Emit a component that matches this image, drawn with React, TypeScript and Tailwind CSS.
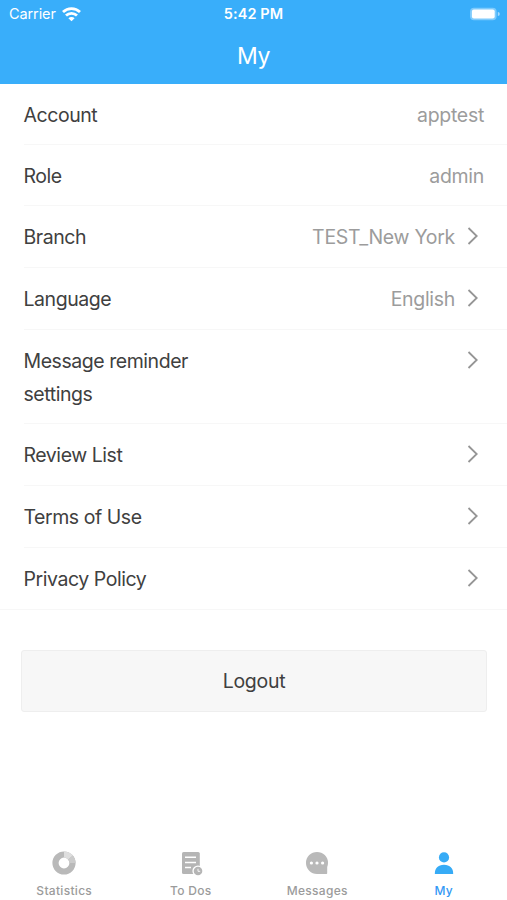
import React from "react";
import clsx from "clsx";

const rows = [
  { label: "Account", value: "apptest", height: "h-[61px]" },
  { label: "Role", value: "admin", height: "h-[61px]" },
  { label: "Branch", value: "TEST_New York", arrow: true, height: "h-[62px]" },
  { label: "Language", value: "English", arrow: true, height: "h-[62px]" },
  { label: "Message reminder settings", arrow: true, height: "h-[94px]" },
  { label: "Review List", arrow: true, height: "h-[62px]" },
  { label: "Terms of Use", arrow: true, height: "h-[62px]" },
  { label: "Privacy Policy", arrow: true, height: "h-[61px]" },
];

const tabs = [
  { name: "Statistics", icon: StatisticsIcon },
  { name: "To Dos", icon: TodoIcon },
  { name: "Messages", icon: MessagesIcon },
  { name: "My", icon: UserIcon, active: true },
];

function StatisticsIcon() {
  return (
    <svg width="26" height="26" viewBox="0 0 26 26" fill="none" strokeWidth="6.2">
      <circle cx="13" cy="13" r="8.5" stroke="#b9b9b9" />
      <path d="M13 4.5A8.5 8.5 0 0 1 19.5 7.5" stroke="#dedede" />
      <path d="M19.5 7.5A8.5 8.5 0 0 1 21.5 13" stroke="#cbcbcb" />
    </svg>
  );
}

function TodoIcon() {
  return (
    <svg width="26" height="26" viewBox="0 0 26 26" fill="none">
      <rect x="4" y="2" width="17.8" height="22" rx="1.6" fill="#b5b5b5" />
      <path d="M7 7.2h11M7 12.4h11M7 17.6h6" stroke="#fff" strokeWidth="1.5" />
      <circle cx="20" cy="21" r="5.6" fill="#fff" />
      <circle cx="20" cy="21" r="4.3" fill="#b5b5b5" />
      <path d="M20 18.8V21.3h2.2" stroke="#fff" strokeWidth="0.9" />
    </svg>
  );
}

function MessagesIcon() {
  return (
    <svg width="26" height="26" viewBox="0 0 26 26" fill="none">
      <path d="M13 1.9a11 11 0 1 0 0 22h9.2c.7 0 1-.4 1-1v-6a11 11 0 0 0 .8-4A11 11 0 0 0 13 1.9Z" fill="#b9b9b9" />
      <circle cx="7.4" cy="13" r="1.6" fill="#fff" />
      <circle cx="13" cy="13" r="1.6" fill="#fff" />
      <circle cx="18.6" cy="13" r="1.6" fill="#fff" />
    </svg>
  );
}

function UserIcon() {
  return (
    <svg width="26" height="26" viewBox="0 0 26 26" fill="#36abf6">
      <circle cx="13" cy="7.4" r="5.1" />
      <path d="M3.8 23.9c0-5.6 3.2-9.1 9.2-9.1s9.2 3.5 9.2 9.1Z" />
    </svg>
  );
}

function WifiIcon() {
  return (
    <svg width="19" height="15" viewBox="0 0 19 15" fill="none" stroke="#fff" strokeWidth="2.8">
      <path d="M1 5a12.2 12.2 0 0 1 17 0" />
      <path d="M4 8.6a7.9 7.9 0 0 1 11 0" />
      <path d="M9.5 14.3 6.4 11.2a4.4 4.4 0 0 1 6.2 0Z" fill="#fff" stroke="none" />
    </svg>
  );
}

function BatteryIcon() {
  return (
    <svg width="32" height="14" viewBox="0 0 32 14">
      <rect x="1" y="0.7" width="26.6" height="12.6" rx="4" fill="#7fcbfc" />
      <rect x="2.9" y="2.6" width="22.8" height="8.8" rx="2" fill="#fff" />
      <path d="M28.8 5a2 2 0 0 1 0 4Z" fill="#a5dafd" />
    </svg>
  );
}

function Arrow() {
  return (
    <svg className="ml-[12px] mr-[5px] mt-[6px] shrink-0" width="12" height="18" viewBox="0 0 12 18" fill="none" stroke="#959595" strokeWidth="1.8">
      <path d="M1.5 1 9.7 9 1.5 17" />
    </svg>
  );
}

export default function App() {
  return (
    <div className="flex h-[900px] w-[507px] flex-col overflow-hidden bg-white font-['Inter',sans-serif] text-[#404040]">
      <header className="h-[84px] bg-[#39aefa] text-white">
        <div className="grid h-[28px] grid-cols-3 items-center pl-[9px] pr-[6px]">
          <div className="flex items-center gap-[6px] text-[14.5px] tracking-[-0.1px]">
            <span>Carrier</span>
            <WifiIcon />
          </div>
          <span className="-ml-[3px] text-center text-[14.5px] font-semibold tracking-[0.1px]">5:42 PM</span>
          <div className="flex justify-end">
            <BatteryIcon />
          </div>
        </div>
        <h1 className="text-center text-[23px] leading-[56px] tracking-[-0.3px]">My</h1>
      </header>

      <main className="flex-1">
        <div className="border-b border-[#f7f7f7]">
          {rows.map((row, index) => (
            <div key={row.label} className="pl-[24px]">
              <div
                className={clsx(
                  "flex items-start justify-between pr-[23px] pt-[15px] text-[19.5px] leading-[33px]",
                  row.height,
                  index < rows.length - 1 && "border-b border-[#f7f7f7]"
                )}
              >
                <span className="-ml-[0.5px] w-[190px] tracking-[-0.45px]">{row.label}</span>
                <div className="flex items-start tracking-[-0.3px] text-[#9c9c9c]">
                  {row.value && <span>{row.value}</span>}
                  {row.arrow && <Arrow />}
                </div>
              </div>
            </div>
          ))}
        </div>
        <div className="pl-[21px] pr-[20px] pt-[40px]">
          <button className="h-[62px] w-full rounded-[3px] border border-[#eeeeee] bg-[#f7f7f7] pt-[2px] text-[19.5px] tracking-[-0.3px]">
            Logout
          </button>
        </div>
      </main>

      <nav className="grid h-[52px] grid-cols-4 pl-[1px]">
        {tabs.map((tab) => (
          <div
            key={tab.name}
            className={clsx(
              "flex flex-col items-center gap-[7px] pt-[2px] text-[12px] leading-[15px] font-medium tracking-[0.3px]",
              tab.active ? "text-[#3399f5]" : "text-[#9b9b9b]"
            )}
          >
            <tab.icon />
            <span>{tab.name}</span>
          </div>
        ))}
      </nav>
    </div>
  );
}
